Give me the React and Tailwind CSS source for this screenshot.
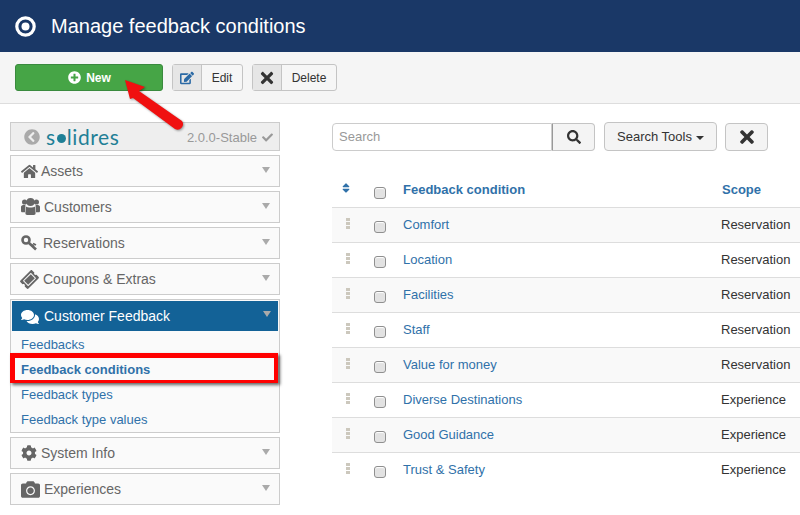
import {
  FaCamera,
  FaCheck,
  FaChevronCircleLeft,
  FaCog,
  FaComments,
  FaEdit,
  FaHome,
  FaPlusCircle,
  FaSearch,
  FaSort,
  FaTicketAlt,
  FaTimes,
} from 'react-icons/fa';

const rows = [
  ['Comfort', 'Reservation'],
  ['Location', 'Reservation'],
  ['Facilities', 'Reservation'],
  ['Staff', 'Reservation'],
  ['Value for money', 'Reservation'],
  ['Diverse Destinations', 'Experience'],
  ['Good Guidance', 'Experience'],
  ['Trust & Safety', 'Experience'],
];

function Caret() {
  return <span className="mr-[5px] h-0 w-0 border-x-[4.5px] border-t-[6px] border-x-transparent border-t-[#aaa]" />;
}

function UsersIcon() {
  return (
    <svg width="19" height="19" viewBox="0 0 19 19" fill="currentColor" className="-mt-[2px]">
      <circle cx="3.6" cy="5" r="2.6" />
      <circle cx="15.4" cy="5" r="2.6" />
      <circle cx="9.5" cy="5" r="4" />
      <path d="M0 9.5c1-1.5 3-1.8 4.5-1.2l-.5 7H1.500C.5 15.300 0 14.800 0 13.800zM19 9.500c-1-1.500-3-1.800-4.500-1.200l.5 7h2.500c1 0 1.500-.5 1.500-1.500z" />
      <path d="M5 9.500c1.500 1.300 7.500 1.300 9 0l.6 6.500c.1 1.200-.6 2-1.800 2H6.200c-1.200 0-1.900-.8-1.800-2z" />
    </svg>
  );
}

function KeyIcon() {
  return (
    <svg width="17" height="16" viewBox="0 0 17 16" fill="none" stroke="currentColor" className="-mt-[1px]">
      <circle cx="5" cy="5" r="3.500" strokeWidth="2.600" />
      <path d="M7.500 7.500 15 14.500" strokeWidth="2.600" />
      <path d="M12 8.500l3 1.500M10 9.500l3 2" strokeWidth="1.800" />
    </svg>
  );
}

function MenuItem({ icon, label, gap = 'gap-[4px]' }) {
  return (
    <div className="flex h-[32px] items-start border border-[#ccc] bg-[#fafafa] pl-[10px] pr-[4px] pt-[6px]">
      <span className={`flex items-center ${gap} text-[14px] leading-[18px] text-[#666]`}>
        {icon}
        {label}
      </span>
      <span className="ml-auto mt-[5px] flex">
        <Caret />
      </span>
    </div>
  );
}

function Checkbox() {
  return <span className="block h-[12px] w-[12px] rounded-[3px] border border-[#8f8f8f] bg-[#e2e2e2] shadow-[inset_0_1px_1px_#fff]" />;
}

function DragHandle() {
  return (
    <span className="flex w-[4px] flex-col gap-[1px]">
      <span className="h-[3px] bg-[#ccc8bd]" />
      <span className="h-[3px] bg-[#ccc8bd]" />
      <span className="h-[3px] bg-[#ccc8bd]" />
    </span>
  );
}

function ToolButton({ icon, label, width }) {
  return (
    <div className={`flex h-[27px] items-stretch rounded-[3px] border border-[#c4c4c4] bg-[#f6f6f6] text-xs text-[#333] ${width}`}>
      <span className="flex w-[29px] items-center justify-center border-r border-[#c4c4c4] bg-[#e6e6e6]">{icon}</span>
      <span className="flex flex-1 items-center justify-center">{label}</span>
    </div>
  );
}

export default function App() {
  return (
    <div className="relative h-[515px] w-[800px] overflow-hidden bg-white font-['Liberation_Sans',Arial,sans-serif]">
      <header className="flex h-[52px] items-center gap-[15px] bg-[#1a3867] pl-[15px] text-white">
        <svg width="21" height="21" viewBox="0 0 21 21" fill="none" className="shrink-0">
          <circle cx="10.500" cy="10.500" r="8.700" stroke="currentColor" strokeWidth="3.200" />
          <circle cx="10.500" cy="10.500" r="4" fill="currentColor" />
        </svg>
        <h1 className="text-[20px] leading-none">Manage feedback conditions</h1>
      </header>

      <div className="flex h-[52px] items-start gap-[9px] border-b border-[#ddd] bg-[#f5f5f5] pl-[15px] pt-[12px]">
        <button className="flex h-[27px] w-[148px] items-center justify-center gap-[5px] rounded-[3px] border border-[#3a8a3e] bg-[#46a546] pl-[1px] text-xs font-bold text-white">
          <FaPlusCircle className="text-[13px]" />
          New
        </button>
        <ToolButton icon={<FaEdit className="text-[14px] text-[#2a69a5]" />} label="Edit" width="w-[71px]" />
        <ToolButton icon={<FaTimes className="text-[18px] text-[#333]" />} label="Delete" width="w-[85px]" />
      </div>

      <div className="flex items-start pl-[10px] pt-[18px]">
        <aside className="flex w-[270px] flex-col gap-[4px]">
          <div className="flex h-[29px] items-center border border-[#ccc] bg-[#eee] pl-[13px] pr-[6px]">
            <FaChevronCircleLeft className="text-[16px] text-[#aaa]" />
            <span className="ml-[6px] flex items-center font-['Lato',sans-serif] text-[21px] leading-none tracking-[0.6px] text-[#1f7f96]">
              s<span className="mx-[1px] mt-[3px] inline-block h-[9px] w-[9px] rounded-full bg-[#1f7f96]" />lidres
            </span>
            <span className="ml-auto mt-[2px] flex items-center gap-[5px] text-[13px] text-[#999]">
              2.0.0-Stable
              <FaCheck className="text-[11px] text-[#999]" />
            </span>
          </div>

          <MenuItem icon={<FaHome className="text-[17px]" />} label="Assets" gap="gap-[3px]" />
          <MenuItem icon={<UsersIcon />} label="Customers" />
          <MenuItem icon={<KeyIcon />} label="Reservations" gap="gap-[5px]" />
          <MenuItem icon={<FaTicketAlt className="-rotate-45 text-[17px]" />} label="Coupons & Extras" gap="gap-[5px]" />

          <div className="flex h-[134px] flex-col border border-[#ccc] bg-[#fafafa] p-[1px]">
            <div className="flex h-[30px] shrink-0 items-center gap-[5px] bg-[#136297] pl-[9px] pr-[2px] pt-[1px] text-[14px] text-white">
              <FaComments className="text-[18px]" />
              Customer Feedback
              <span className="ml-auto mb-[5px] flex">
                <Caret />
              </span>
            </div>
            <ul className="flex flex-col pl-[9px] pt-[1px] text-[13px] leading-[25px] text-[#3071a9]">
              <li>Feedbacks</li>
              <li className="font-bold">Feedback conditions</li>
              <li>Feedback types</li>
              <li>Feedback type values</li>
            </ul>
          </div>

          <MenuItem icon={<FaCog className="text-[16px]" />} label="System Info" />
          <MenuItem icon={<FaCamera className="-my-[1px] text-[19px]" />} label="Experiences" />
        </aside>

        <main className="ml-[52px] flex-1 pt-[1px]">
          <div className="flex h-[28px] items-stretch text-[13px]">
            <div className="flex w-[220px] items-center rounded-l-[4px] border border-[#ccc] pl-[6px] text-[#999]">Search</div>
            <div className="flex w-[43px] items-center justify-center rounded-r-[4px] border border-[#c4c4c4] border-l-[#999] bg-[#f4f4f4]">
              <FaSearch className="text-[14px] text-[#333]" />
            </div>
            <div className="ml-[9px] -mt-[1px] flex w-[113px] items-center justify-center gap-[4px] rounded-[4px] border border-[#c4c4c4] bg-[#f4f4f4] text-[#333]">
              Search Tools
              <span className="mt-[2px] h-0 w-0 border-x-[4px] border-t-[4px] border-x-transparent border-t-[#333]" />
            </div>
            <div className="ml-[8px] flex w-[43px] items-center justify-center rounded-[4px] border border-[#c4c4c4] bg-[#f4f4f4]">
              <FaTimes className="text-[20px] text-[#333]" />
            </div>
          </div>

          <table className="mt-[21px] w-[468px] table-fixed border-collapse text-[13px]">
            <colgroup>
              <col className="w-[32px]" />
              <col className="w-[39px]" />
              <col />
              <col className="w-[79px]" />
            </colgroup>
            <thead>
              <tr className="h-[35px] border-b border-[#ddd] text-left font-bold text-[#3071a9]">
                <th className="pl-[8px] pt-[10px] align-top"><FaSort className="text-[12px]" /></th>
                <th className="pl-[10px] pt-[7px]"><Checkbox /></th>
                <th>Feedback condition</th>
                <th className="pl-[1px]">Scope</th>
              </tr>
            </thead>
            <tbody>
              {rows.map(([name, scope], i) => (
                <tr key={name} className={`h-[35px] border-b border-[#ddd] last:border-b-0 ${i % 2 === 0 ? 'bg-[#f9f9f9]' : 'bg-white'}`}>
                  <td className="pl-[14px] pt-[10px] align-top"><DragHandle /></td>
                  <td className="pl-[10px] pt-[5px]"><Checkbox /></td>
                  <td className="text-[#3071a9]">{name}</td>
                  <td className="text-[#333]">{scope}</td>
                </tr>
              ))}
            </tbody>
          </table>
        </main>
      </div>

      {/* annotations added on top of the screenshot */}
      <div className="absolute left-[10px] top-[353px] h-[30px] w-[268px] border-[4px] border-b-[3px] border-l-[5px] border-t-[5px] border-[#f00] shadow-[2px_2px_3px_rgba(0,0,0,0.6)]" />
      <svg className="absolute left-[120px] top-[75px] drop-shadow-[1px_1px_1px_rgba(0,0,0,0.4)]" width="70" height="60" viewBox="0 0 70 60">
        <path d="M5 5 L25 12 L19 16 L62 46 A5.500 5.500 0 0 1 55 54 L13 23 L10 24 Z" fill="#f01010" />
      </svg>
    </div>
  );
}
